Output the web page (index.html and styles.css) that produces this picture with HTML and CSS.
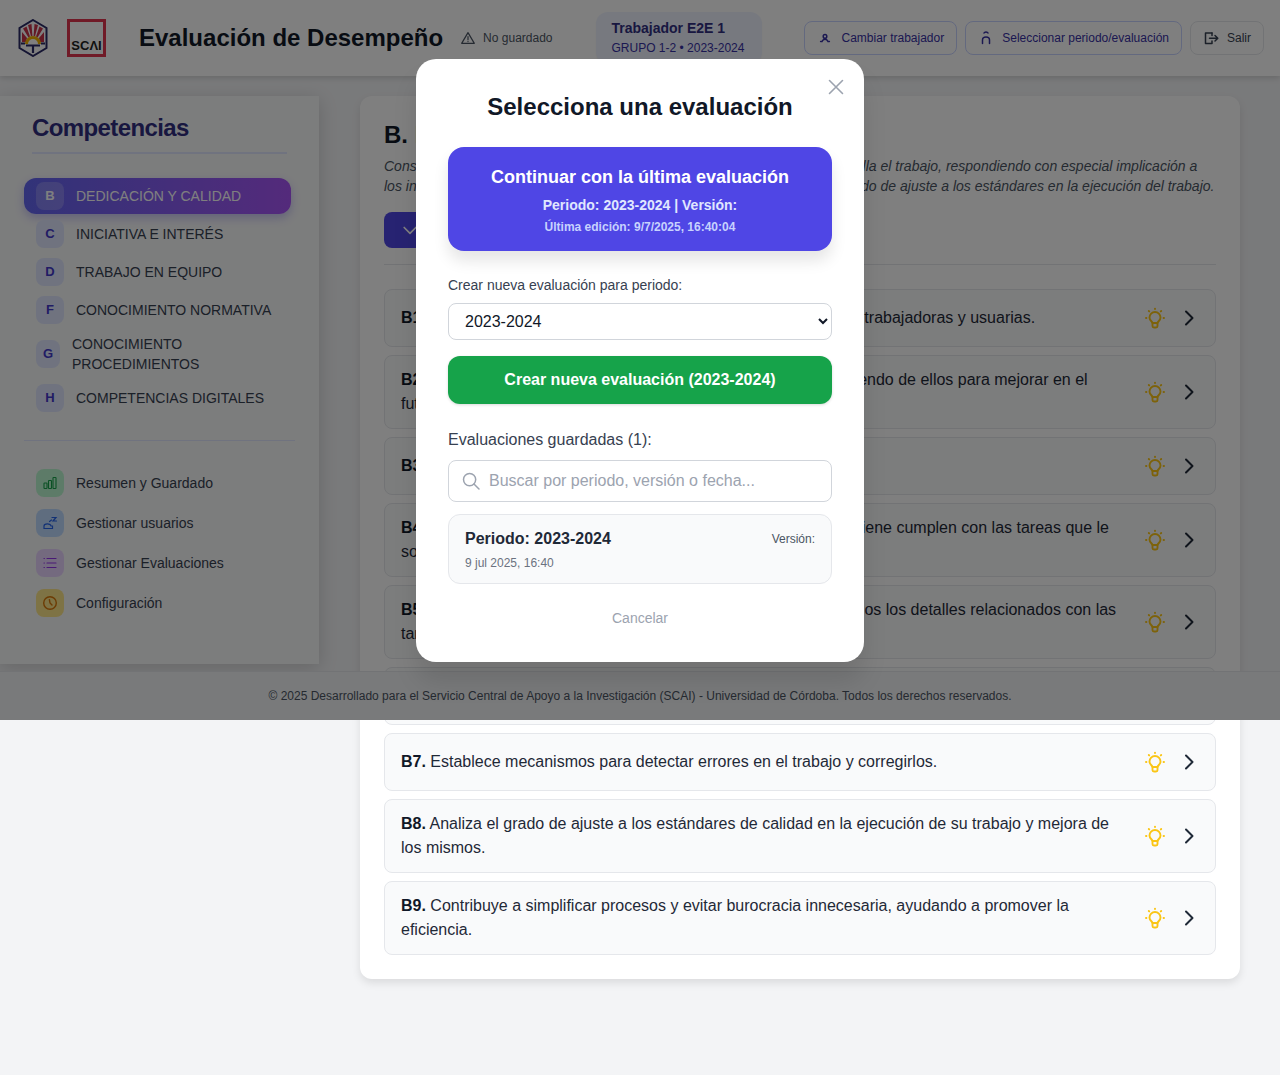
FILE: index.html
```html
<!DOCTYPE html>
<html lang="es">
<head>
<meta charset="utf-8">
<title>Evaluación de Desempeño</title>
<link rel="stylesheet" href="styles.css">
</head>
<body>
<header class="topbar">
  <svg class="logo-uco" viewBox="0 0 30 38" width="30" height="38">
    <path d="M15 1 L28.5 9 V29 L15 37 L1.5 29 V9 Z" fill="#fff" stroke="#2a2a66" stroke-width="2"/>
    <path d="M4 23 L4 13 L9 19 L8 23 Z M5 9.5 L8.5 7.5 L12 17.5 L10.5 18.5 Z M10 6 L13.5 5 L14.4 17 L13 17.2 Z M16.5 5 L20 6 L17 17.2 L15.6 17 Z M21.5 7.5 L25 9.5 L19.5 18.5 L18 17.5 Z M26 13 L26 23 L22 23 L21 19 Z" fill="#c8324a"/>
    <path d="M8.5 25 A6.5 6.5 0 0 1 21.5 25" fill="none" stroke="#f4b400" stroke-width="3"/>
    <path d="M3 24.5 H7 M23 24.5 H27 M8 26.5 H22 M15 26 V34" stroke="#2a2a66" stroke-width="2.2" fill="none"/>
  </svg>
  <div class="logo-scai"><span>SCΛI</span></div>
  <h1 class="app-title">Evaluación de Desempeño</h1>
  <div class="save-state">
    <svg viewBox="0 0 24 24" width="16" height="16" fill="none" stroke="#4b5563" stroke-width="1.8" stroke-linejoin="round" stroke-linecap="round"><path d="M12 4 L21.5 20 H2.5 Z"/><path d="M12 10 V14.5 M12 17.2 V17.4"/></svg>
    <span>No guardado</span>
  </div>
  <div class="top-right">
    <div class="worker">
      <div class="worker-name">Trabajador E2E 1</div>
      <div class="worker-group">GRUPO 1-2 • 2023-2024</div>
    </div>
    <div class="top-actions">
      <button class="top-btn">
        <svg viewBox="0 0 16 16" width="16" height="16" fill="none" stroke="#3730a3" stroke-width="1.5" stroke-linecap="round"><circle cx="8" cy="6.4" r="1.8"/><path d="M3.6 11.4 H5 C5.6 9.8 6.6 9.2 8 9.2 C9.4 9.2 10.4 9.8 11 11.4 H12.4"/></svg>
        <span>Cambiar trabajador</span>
      </button>
      <button class="top-btn">
        <svg viewBox="0 0 16 16" width="16" height="16" fill="none" stroke="#3730a3" stroke-width="1.5" stroke-linecap="round"><path d="M6 3 C6.6 1.6 9.4 1.6 10 3"/><path d="M4.5 13.5 V10 C4.5 6 11.5 6 11.5 10 V13.5"/></svg>
        <span>Seleccionar periodo/evaluación</span>
      </button>
      <button class="top-btn top-btn-plain">
        <svg viewBox="0 0 16 16" width="16" height="16" fill="none" stroke="#374151" stroke-width="1.5" stroke-linecap="round" stroke-linejoin="round"><path d="M9 3 H2.5 V13.5 H9 V11"/><path d="M9 5.5 V3 M6.5 8.2 H14.5 M12 5.5 L14.8 8.2 L12 11"/></svg>
        <span>Salir</span>
      </button>
    </div>
  </div>
</header>

<div class="layout">
  <aside class="sidebar">
    <h2 class="side-title">Competencias</h2>
    <ul class="comp-list">
      <li class="comp active"><span class="badge">B</span><span>DEDICACIÓN Y CALIDAD</span></li>
      <li class="comp"><span class="badge">C</span><span>INICIATIVA E INTERÉS</span></li>
      <li class="comp"><span class="badge">D</span><span>TRABAJO EN EQUIPO</span></li>
      <li class="comp"><span class="badge">F</span><span>CONOCIMIENTO NORMATIVA</span></li>
      <li class="comp comp-wrap"><span class="badge">G</span><span>CONOCIMIENTO PROCEDIMIENTOS</span></li>
      <li class="comp"><span class="badge">H</span><span>COMPETENCIAS DIGITALES</span></li>
    </ul>
    <ul class="tool-list">
      <li class="tool"><span class="tool-icon t-green"><svg viewBox="0 0 16 16" width="16" height="16" fill="none" stroke="#16a34a" stroke-width="1.1"><rect x="2" y="8" width="3" height="5.5" rx=".6"/><rect x="6.5" y="5.5" width="3" height="8" rx=".6"/><rect x="11" y="2.5" width="3" height="11" rx=".6"/></svg></span><span>Resumen y Guardado</span></li>
      <li class="tool"><span class="tool-icon t-blue"><svg viewBox="0 0 16 16" width="16" height="16" fill="none" stroke="#2563eb" stroke-width="1.2" stroke-linecap="round"><path d="M2 13.5 V11 C2 8.2 8.5 8.2 9 11 H10.5 V13.5 Z"/><path d="M7.5 6.5 L9.5 5 M10 2.5 H14 L11 6 H14.5"/></svg></span><span>Gestionar usuarios</span></li>
      <li class="tool"><span class="tool-icon t-purple"><svg viewBox="0 0 16 16" width="16" height="16" fill="none" stroke="#9333ea" stroke-width="1.2" stroke-linecap="round"><path d="M5 3.5 H14 M5 8 H14 M5 12.5 H14"/><path d="M2 3.5 H2.4 M2 8 H2.4 M2 12.5 H2.4"/></svg></span><span>Gestionar Evaluaciones</span></li>
      <li class="tool"><span class="tool-icon t-amber"><svg viewBox="0 0 16 16" width="16" height="16" fill="none" stroke="#d97706" stroke-width="1.4" stroke-linecap="round"><circle cx="8" cy="8" r="6.3"/><path d="M7.4 4.6 L8 8 L10 10"/></svg></span><span>Configuración</span></li>
    </ul>
  </aside>

  <main class="content">
    <section class="card">
      <h2 class="card-title">B. DEDICACIÓN Y CALIDAD</h2>
      <p class="card-desc">Constancia y esfuerzo, interés y dedicación con la que cada persona desarrolla el trabajo, respondiendo con especial implicación a los intereses de su organización, y de sus usuarios, consiguiendo un alto grado de ajuste a los estándares en la ejecución del trabajo.</p>
      <button class="toggle"><svg viewBox="0 0 24 24" width="20" height="20" fill="none" stroke="#fff" stroke-width="2" stroke-linecap="round" stroke-linejoin="round"><path d="M5 9 L12 16 L19 9"/></svg><span>Autoevaluación completa</span></button>
      <hr class="sep">
      <ol class="questions">
        <li class="q"><p><b>B1.</b> Atiende con corrección y rigor las peticiones de las personas trabajadoras y usuarias.</p><svg class="bulb"><use href="#i-bulb"/></svg><svg class="chev"><use href="#i-chev"/></svg></li>
        <li class="q"><p><b>B2.</b> Reconoce los errores cometidos en el trabajo diario, aprendiendo de ellos para mejorar en el futuro.</p><svg class="bulb"><use href="#i-bulb"/></svg><svg class="chev"><use href="#i-chev"/></svg></li>
        <li class="q"><p><b>B3.</b> Muestra constancia en el trabajo.</p><svg class="bulb"><use href="#i-bulb"/></svg><svg class="chev"><use href="#i-chev"/></svg></li>
        <li class="q"><p><b>B4.</b> Asume la responsabilidad en el trabajo diario o de quien sostiene cumplen con las tareas que le son asignadas.</p><svg class="bulb"><use href="#i-bulb"/></svg><svg class="chev"><use href="#i-chev"/></svg></li>
        <li class="q"><p><b>B5.</b> Presenta los resultados con rigor y exactitud, controlando todos los detalles relacionados con las tareas.</p><svg class="bulb"><use href="#i-bulb"/></svg><svg class="chev"><use href="#i-chev"/></svg></li>
        <li class="q"><p><b>B6.</b> Cumple los plazos establecidos en la ejecución de su trabajo.</p><svg class="bulb"><use href="#i-bulb"/></svg><svg class="chev"><use href="#i-chev"/></svg></li>
        <li class="q"><p><b>B7.</b> Establece mecanismos para detectar errores en el trabajo y corregirlos.</p><svg class="bulb"><use href="#i-bulb"/></svg><svg class="chev"><use href="#i-chev"/></svg></li>
        <li class="q"><p><b>B8.</b> Analiza el grado de ajuste a los estándares de calidad en la ejecución de su trabajo y mejora de los mismos.</p><svg class="bulb"><use href="#i-bulb"/></svg><svg class="chev"><use href="#i-chev"/></svg></li>
        <li class="q"><p><b>B9.</b> Contribuye a simplificar procesos y evitar burocracia innecesaria, ayudando a promover la eficiencia.</p><svg class="bulb"><use href="#i-bulb"/></svg><svg class="chev"><use href="#i-chev"/></svg></li>
      </ol>
    </section>
  </main>
</div>

<footer class="footer">© 2025 Desarrollado para el Servicio Central de Apoyo a la Investigación (SCAI) - Universidad de Córdoba. Todos los derechos reservados.</footer>

<div class="overlay">
  <div class="modal">
    <svg class="close" viewBox="0 0 16 16" width="16" height="16" fill="none" stroke="#9ca3af" stroke-width="1.6" stroke-linecap="round"><path d="M1.5 1.5 L14.5 14.5 M14.5 1.5 L1.5 14.5"/></svg>
    <h2 class="modal-title">Selecciona una evaluación</h2>
    <button class="continue">
      <span class="c-main">Continuar con la última evaluación</span>
      <span class="c-sub">Periodo: 2023-2024 | Versión:</span>
      <span class="c-date">Última edición: 9/7/2025, 16:40:04</span>
    </button>
    <label class="new-label" for="periodo">Crear nueva evaluación para periodo:</label>
    <select class="period" id="periodo"><option>2023-2024</option></select>
    <button class="create">Crear nueva evaluación (2023-2024)</button>
    <div class="saved-label">Evaluaciones guardadas (1):</div>
    <div class="search">
      <svg viewBox="0 0 20 20" width="20" height="20" fill="none" stroke="#9ca3af" stroke-width="1.5" stroke-linecap="round"><circle cx="8.6" cy="8.6" r="6.1"/><path d="M13 13 L18 18"/></svg>
      <input type="text" placeholder="Buscar por periodo, versión o fecha...">
    </div>
    <div class="saved">
      <div class="saved-row"><strong>Periodo: 2023-2024</strong><span>Versión:</span></div>
      <div class="saved-date">9 jul 2025, 16:40</div>
    </div>
    <div class="cancel">Cancelar</div>
  </div>
</div>

<svg class="defs" width="0" height="0">
  <symbol id="i-bulb" viewBox="0 0 24 24"><g fill="none" stroke="#fac515" stroke-width="1.9" stroke-linecap="round" stroke-linejoin="round"><path d="M9.5 17 C9 15 6.5 14.5 6.5 11.5 A5.5 5.5 0 0 1 17.5 11.5 C17.5 14.5 15 15 14.5 17 Z"/><path d="M9.5 17 V20 Q9.5 21.5 11 21.5 H13 Q14.5 21.5 14.5 20 V17"/><path d="M12 2.6 V3 M5.8 5 L6.2 5.4 M18.2 5 L17.8 5.4 M3 12 H3.4 M20.6 12 H21"/></g></symbol>
  <symbol id="i-chev" viewBox="0 0 20 20"><path d="M7 3.5 L13.5 10 L7 16.5" fill="none" stroke="#1f2937" stroke-width="2" stroke-linecap="round" stroke-linejoin="round"/></symbol>
</svg>
</body>
</html>
```

FILE: styles.css
```css
* { box-sizing: border-box; }
html, body { margin: 0; padding: 0; }
body {
  position: relative;
  min-height: 1075px;
  background: #f3f4f6;
  color: #111827;
  font-family: "Liberation Sans", Arial, sans-serif;
  font-size: 16px;
}
h1, h2, p, ul, ol { margin: 0; padding: 0; }
ul, ol { list-style: none; }
button { font-family: inherit; cursor: pointer; }

/* Header */
.topbar {
  display: flex;
  align-items: center;
  height: 76px;
  padding: 0 16px 0 18px;
  background: #fff;
  box-shadow: 0 2px 6px rgba(0,0,0,.15);
}
.logo-uco { flex: none; }
.logo-scai {
  flex: none;
  display: flex;
  align-items: flex-end;
  justify-content: center;
  width: 39px;
  height: 38px;
  margin-left: 19px;
  padding-bottom: 2px;
  border: 3px solid #e0344f;
  background: #fff;
}
.logo-scai span { font-size: 13px; line-height: 13px; font-weight: 700; color: #222; }
.app-title { margin-left: 33px; font-size: 24px; line-height: 32px; font-weight: 700; white-space: nowrap; color: #111827; }
.save-state { display: flex; align-items: center; gap: 7px; margin-left: 17px; font-size: 12px; color: #4b5563; }
.top-right { display: flex; align-items: center; margin-left: auto; }
.worker {
  width: 166px;
  height: 52px;
  padding: 6px 15px;
  border-radius: 12px;
  background: #eef2ff;
  box-shadow: 0 1px 2px rgba(0,0,0,.05);
  color: #312e81;
}
.worker-name { font-size: 14px; line-height: 20px; font-weight: 700; }
.worker-group { margin-top: 2px; font-size: 12px; line-height: 16px; color: #3730a3; white-space: nowrap; }
.top-actions { display: flex; gap: 8px; margin-left: 42px; }
.top-btn {
  display: flex;
  align-items: center;
  gap: 8px;
  height: 34px;
  padding: 0 12px;
  border: 1px solid #c7d2fe;
  border-radius: 8px;
  background: #fff;
  font-size: 12px;
  color: #3730a3;
  white-space: nowrap;
}
.top-btn-plain { border-color: #e5e7eb; color: #374151; }

/* Layout */
.layout { display: flex; align-items: flex-start; }
.sidebar {
  flex: none;
  width: 319px;
  height: 568px;
  margin-top: 20px;
  padding: 16px 24px;
  background: #f9fafb;
  box-shadow: 0 4px 18px rgba(0,0,0,.16);
}
.side-title {
  margin: 0 8px 24px;
  padding-bottom: 8px;
  border-bottom: 2px solid #e0e7ff;
  font-size: 24px;
  line-height: 32px;
  font-weight: 700;
  letter-spacing: -.6px;
  color: #312e81;
}
.comp-list { display: flex; flex-direction: column; gap: 2px; width: 267px; }
.comp {
  display: flex;
  align-items: center;
  gap: 12px;
  padding: 4px 12px;
  border-radius: 12px;
  font-size: 14px;
  line-height: 20px;
  color: #374151;
}
.badge {
  flex: none;
  display: flex;
  align-items: center;
  justify-content: center;
  width: 28px;
  height: 28px;
  border-radius: 8px;
  background: #e0e7ff;
  font-size: 13px;
  font-weight: 700;
  color: #4338ca;
}
.comp-wrap .badge { width: 24px; }
.comp.active {
  background: linear-gradient(90deg, #6366f1, #a855f7);
  box-shadow: 0 4px 10px rgba(79,70,229,.3);
  color: #fff;
}
.comp.active .badge { background: rgba(255,255,255,.2); color: #fff; }
.tool-list {
  display: flex;
  flex-direction: column;
  gap: 4px;
  margin-top: 24px;
  padding-top: 24px;
  border-top: 1px solid #e0e7ff;
}
.tool {
  display: flex;
  align-items: center;
  gap: 12px;
  padding: 4px 12px;
  font-size: 14px;
  line-height: 20px;
  color: #374151;
}
.tool-icon { flex: none; display: flex; align-items: center; justify-content: center; width: 28px; height: 28px; border-radius: 8px; }
.t-green { background: #bbf7d0; }
.t-blue { background: #bfdbfe; }
.t-purple { background: #e9d5ff; }
.t-amber { background: #fde68a; }

/* Main card */
.content { flex: 1; min-width: 0; padding: 20px 40px 0 41px; }
.card {
  padding: 24px;
  border-radius: 12px;
  background: #fff;
  box-shadow: 0 4px 8px rgba(0,0,0,.1);
}
.card-title { font-size: 24px; line-height: 30px; font-weight: 700; color: #111827; }
.card-desc { margin-top: 6px; font-size: 14px; line-height: 20px; font-style: italic; color: #4b5563; }
.toggle {
  display: flex;
  align-items: center;
  gap: 8px;
  height: 36px;
  margin-top: 16px;
  padding: 0 16px;
  border: 0;
  border-radius: 8px;
  background: #4f46e5;
  font-size: 14px;
  color: #fff;
}
.sep { height: 1px; margin: 16px 0 24px; border: 0; background: #e5e7eb; }
.questions { display: flex; flex-direction: column; gap: 8px; }
.q {
  display: flex;
  align-items: center;
  padding: 12px 16px;
  border: 1px solid #e5e7eb;
  border-radius: 8px;
  background: #f9fafb;
}
.q p { flex: 1; margin-right: 16px; line-height: 24px; color: #1f2937; }
.q b { color: #111827; }
.bulb { flex: none; width: 24px; height: 24px; margin: 4px; }
.chev { flex: none; width: 20px; height: 20px; margin-left: 8px; }
.defs { position: absolute; }

/* Footer */
.footer {
  position: absolute;
  top: 671px;
  left: 0;
  right: 0;
  height: 49px;
  display: flex;
  align-items: center;
  justify-content: center;
  border-top: 1px solid #e5e7eb;
  background: #f3f4f6;
  font-size: 12px;
  color: #4b5563;
}

/* Modal */
.overlay {
  position: absolute;
  top: 0;
  left: 0;
  right: 0;
  height: 720px;
  display: flex;
  align-items: center;
  justify-content: center;
  background: rgba(0,0,0,.5);
}
.modal {
  position: relative;
  display: flex;
  flex-direction: column;
  width: 448px;
  padding: 32px 32px 34px;
  border-radius: 20px;
  background: #fff;
  box-shadow: 0 20px 25px rgba(0,0,0,.1);
}
.close { position: absolute; top: 20px; right: 20px; }
.modal-title { margin-bottom: 24px; text-align: center; font-size: 24px; line-height: 32px; font-weight: 700; color: #111827; }
.continue {
  display: flex;
  flex-direction: column;
  align-items: center;
  height: 104px;
  padding: 16px;
  border: 0;
  border-radius: 16px;
  background: #4f46e5;
  box-shadow: 0 10px 15px rgba(0,0,0,.1);
  color: #fff;
  font-weight: 700;
}
.c-main { font-size: 18px; line-height: 28px; }
.c-sub { margin-top: 4px; font-size: 14px; line-height: 20px; color: #e0e7ff; }
.c-date { margin-top: 4px; font-size: 12px; line-height: 16px; color: #c7d2fe; }
.new-label { margin-top: 24px; font-size: 14px; line-height: 20px; color: #374151; }
.period {
  height: 37px;
  margin-top: 8px;
  padding: 0 12px;
  border: 1px solid #d1d5db;
  border-radius: 8px;
  background: #fff;
  font-family: inherit;
  font-size: 16px;
  color: #111827;
}
.create {
  height: 48px;
  margin-top: 16px;
  border: 0;
  border-radius: 12px;
  background: #16a34a;
  box-shadow: 0 1px 3px rgba(0,0,0,.15);
  font-size: 16px;
  font-weight: 700;
  color: #fff;
}
.saved-label { margin-top: 24px; line-height: 24px; color: #374151; }
.search {
  display: flex;
  align-items: center;
  gap: 8px;
  height: 42px;
  margin-top: 8px;
  padding: 0 12px;
  border: 1px solid #d1d5db;
  border-radius: 8px;
}
.search input { flex: 1; min-width: 0; padding: 0; border: 0; outline: 0; background: transparent; font-family: inherit; font-size: 16px; }
.search input::placeholder { color: #9ca3af; opacity: 1; }
.saved {
  height: 70px;
  margin-top: 12px;
  padding: 12px 16px;
  border: 1px solid #e5e7eb;
  border-radius: 12px;
  background: #f9fafb;
}
.saved-row { display: flex; align-items: center; justify-content: space-between; line-height: 24px; }
.saved-row strong { font-weight: 700; color: #1f2937; }
.saved-row span { font-size: 12px; color: #4b5563; }
.saved-date { margin-top: 4px; font-size: 12px; line-height: 16px; color: #6b7280; }
.cancel { margin-top: 24px; text-align: center; font-size: 14px; line-height: 20px; color: #9ca3af; }
```
